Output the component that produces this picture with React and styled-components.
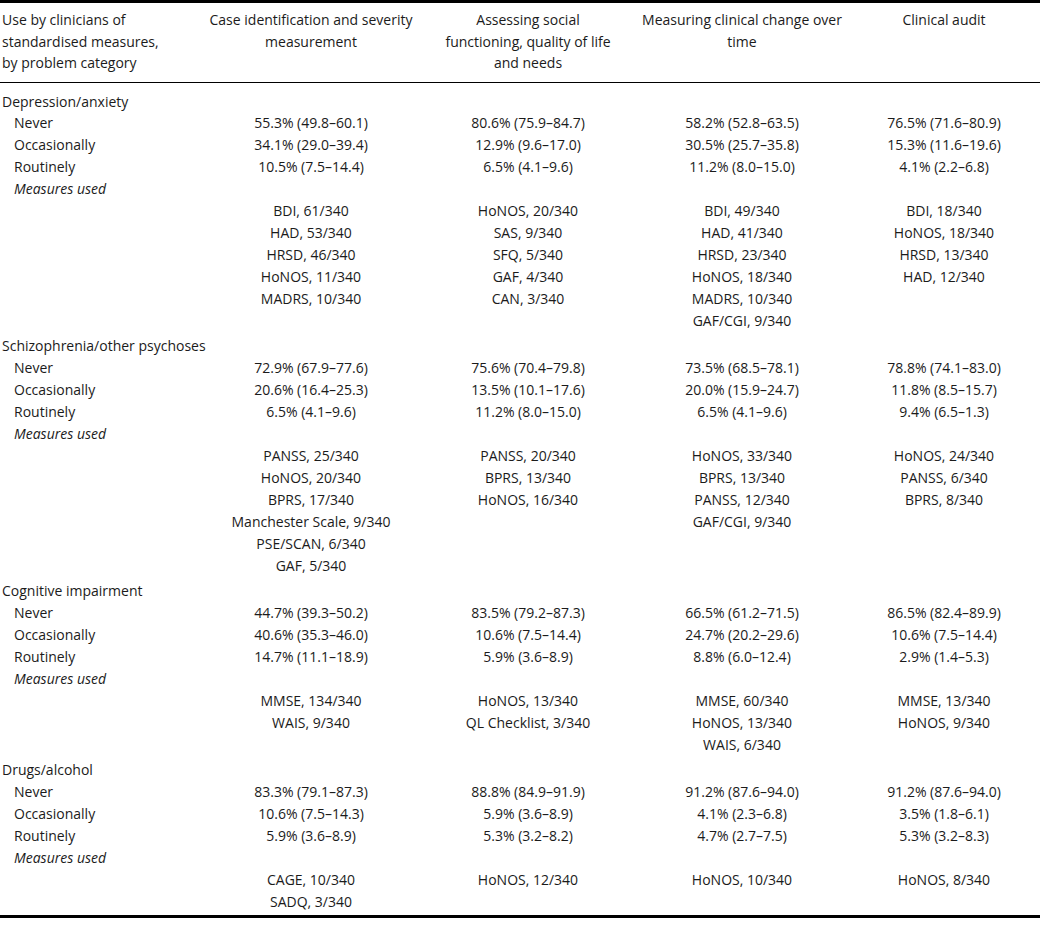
import React from "react";
import styled, { createGlobalStyle } from "styled-components";

const GlobalStyle = createGlobalStyle`
  html, body {
    margin: 0;
    padding: 0;
    background: #ffffff;
  }
  body {
    font-family: "Open Sans", "Lato", "Liberation Sans", sans-serif;
    color: #1b1b1b;
  }
`;

const COLS = "202px 218px 216px 212px 1fr";

const Table = styled.div`
  width: 1040px;
  border-top: 3px solid #000;
  border-bottom: 3px solid #000;
  font-size: 14px;
`;

const HeaderRow = styled.div`
  display: grid;
  grid-template-columns: ${COLS};
  padding: 6px 0 8px;
  border-bottom: 1px solid #000;
  line-height: 21.5px;
`;

const HeadCell = styled.div`
  text-align: ${(p) => (p.$first ? "left" : "center")};
  padding-left: ${(p) => (p.$first ? "2px" : "0")};
  white-space: nowrap;
`;

const Body = styled.div`
  padding: 8px 0 2px;
`;

const Row = styled.div`
  display: grid;
  grid-template-columns: ${COLS};
  line-height: 21.94px;
  margin-top: ${(p) => (p.$gap ? "3.5px" : "0")};
`;

const Label = styled.div`
  padding-left: ${(p) => (p.$indent ? "14px" : "2px")};
  font-style: ${(p) => (p.$italic ? "italic" : "normal")};
  white-space: nowrap;
`;

const Cell = styled.div`
  text-align: center;
  white-space: nowrap;
`;

const List = styled.div`
  display: flex;
  flex-direction: column;
  align-items: center;
  white-space: nowrap;
`;

const headers = [
  ["Use by clinicians of", "standardised measures,", "by problem category"],
  ["Case identification and severity", "measurement"],
  ["Assessing social", "functioning, quality of life", "and needs"],
  ["Measuring clinical change over", "time"],
  ["Clinical audit"],
];

const groups = [
  {
    title: "Depression/anxiety",
    rows: [
      ["Never", "55.3% (49.8–60.1)", "80.6% (75.9–84.7)", "58.2% (52.8–63.5)", "76.5% (71.6–80.9)"],
      ["Occasionally", "34.1% (29.0–39.4)", "12.9% (9.6–17.0)", "30.5% (25.7–35.8)", "15.3% (11.6–19.6)"],
      ["Routinely", "10.5% (7.5–14.4)", "6.5% (4.1–9.6)", "11.2% (8.0–15.0)", "4.1% (2.2–6.8)"],
    ],
    measures: [
      ["BDI, 61/340", "HAD, 53/340", "HRSD, 46/340", "HoNOS, 11/340", "MADRS, 10/340"],
      ["HoNOS, 20/340", "SAS, 9/340", "SFQ, 5/340", "GAF, 4/340", "CAN, 3/340"],
      ["BDI, 49/340", "HAD, 41/340", "HRSD, 23/340", "HoNOS, 18/340", "MADRS, 10/340", "GAF/CGI, 9/340"],
      ["BDI, 18/340", "HoNOS, 18/340", "HRSD, 13/340", "HAD, 12/340"],
    ],
  },
  {
    title: "Schizophrenia/other psychoses",
    rows: [
      ["Never", "72.9% (67.9–77.6)", "75.6% (70.4–79.8)", "73.5% (68.5–78.1)", "78.8% (74.1–83.0)"],
      ["Occasionally", "20.6% (16.4–25.3)", "13.5% (10.1–17.6)", "20.0% (15.9–24.7)", "11.8% (8.5–15.7)"],
      ["Routinely", "6.5% (4.1–9.6)", "11.2% (8.0–15.0)", "6.5% (4.1–9.6)", "9.4% (6.5–1.3)"],
    ],
    measures: [
      ["PANSS, 25/340", "HoNOS, 20/340", "BPRS, 17/340", "Manchester Scale, 9/340", "PSE/SCAN, 6/340", "GAF, 5/340"],
      ["PANSS, 20/340", "BPRS, 13/340", "HoNOS, 16/340"],
      ["HoNOS, 33/340", "BPRS, 13/340", "PANSS, 12/340", "GAF/CGI, 9/340"],
      ["HoNOS, 24/340", "PANSS, 6/340", "BPRS, 8/340"],
    ],
  },
  {
    title: "Cognitive impairment",
    rows: [
      ["Never", "44.7% (39.3–50.2)", "83.5% (79.2–87.3)", "66.5% (61.2–71.5)", "86.5% (82.4–89.9)"],
      ["Occasionally", "40.6% (35.3–46.0)", "10.6% (7.5–14.4)", "24.7% (20.2–29.6)", "10.6% (7.5–14.4)"],
      ["Routinely", "14.7% (11.1–18.9)", "5.9% (3.6–8.9)", "8.8% (6.0–12.4)", "2.9% (1.4–5.3)"],
    ],
    measures: [
      ["MMSE, 134/340", "WAIS, 9/340"],
      ["HoNOS, 13/340", "QL Checklist, 3/340"],
      ["MMSE, 60/340", "HoNOS, 13/340", "WAIS, 6/340"],
      ["MMSE, 13/340", "HoNOS, 9/340"],
    ],
  },
  {
    title: "Drugs/alcohol",
    rows: [
      ["Never", "83.3% (79.1–87.3)", "88.8% (84.9–91.9)", "91.2% (87.6–94.0)", "91.2% (87.6–94.0)"],
      ["Occasionally", "10.6% (7.5–14.3)", "5.9% (3.6–8.9)", "4.1% (2.3–6.8)", "3.5% (1.8–6.1)"],
      ["Routinely", "5.9% (3.6–8.9)", "5.3% (3.2–8.2)", "4.7% (2.7–7.5)", "5.3% (3.2–8.3)"],
    ],
    measures: [
      ["CAGE, 10/340", "SADQ, 3/340"],
      ["HoNOS, 12/340"],
      ["HoNOS, 10/340"],
      ["HoNOS, 8/340"],
    ],
  },
];

function Group({ group, first }) {
  return (
    <>
      <Row $gap={!first}>
        <Label>{group.title}</Label>
      </Row>
      {group.rows.map((r) => (
        <Row key={r[0]}>
          <Label $indent>{r[0]}</Label>
          {r.slice(1).map((v, i) => (
            <Cell key={i}>{v}</Cell>
          ))}
        </Row>
      ))}
      <Row>
        <Label $indent $italic>
          Measures used
        </Label>
      </Row>
      <Row>
        <Label />
        {group.measures.map((list, i) => (
          <List key={i}>
            {list.map((m) => (
              <span key={m}>{m}</span>
            ))}
          </List>
        ))}
      </Row>
    </>
  );
}

export default function App() {
  return (
    <>
      <GlobalStyle />
      <Table>
        <HeaderRow>
          {headers.map((lines, i) => (
            <HeadCell key={i} $first={i === 0}>
              {lines.map((l, j) => (
                <div key={j}>{l}</div>
              ))}
            </HeadCell>
          ))}
        </HeaderRow>
        <Body>
          {groups.map((g, i) => (
            <Group key={g.title} group={g} first={i === 0} />
          ))}
        </Body>
      </Table>
    </>
  );
}
